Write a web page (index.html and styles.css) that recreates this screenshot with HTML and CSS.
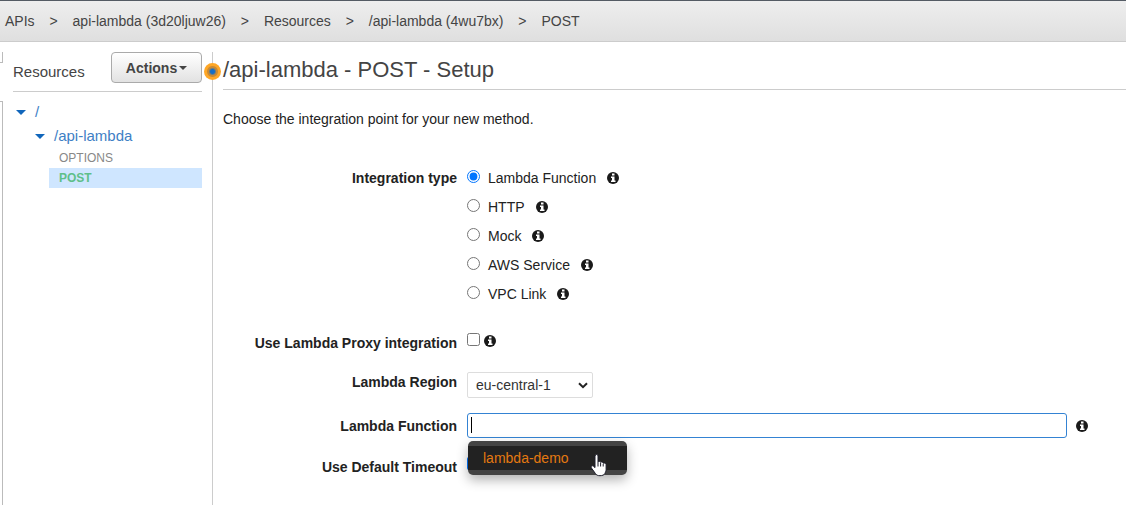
FILE: index.html
```html
<!DOCTYPE html>
<html lang="en">
<head>
<meta charset="utf-8">
<meta name="viewport" content="width=device-width, initial-scale=1">
<title>/api-lambda - POST - Setup</title>
<link rel="stylesheet" href="styles.css">
</head>
<body>
<svg class="defs" aria-hidden="true">
  <symbol id="info" viewBox="0 0 12 12">
    <circle cx="6" cy="6" r="6" fill="#1a1a1a"/>
    <path d="M5 1.500h2.500v2H5zM4 4.500h3.500v4h1V10H4V8.500h1V6H4z" fill="#fff"/>
  </symbol>
</svg>
<nav class="breadcrumb" aria-label="Breadcrumb">
  <a href="#">APIs</a><span class="sep">&gt;</span>
  <a href="#">api-lambda (3d20ljuw26)</a><span class="sep">&gt;</span>
  <a href="#">Resources</a><span class="sep">&gt;</span>
  <a href="#">/api-lambda (4wu7bx)</a><span class="sep">&gt;</span>
  <a href="#">POST</a>
</nav>
<div class="workspace">
  <div class="edge"><div class="edge-tab"></div><div class="edge-panel"></div></div>
  <aside class="sidebar">
    <div class="sidebar-head">
      <h2>Resources</h2>
      <button class="actions" type="button">Actions<span class="caret"></span></button>
    </div>
    <ul class="tree">
      <li class="node"><span class="toggle"></span><a href="#">/</a></li>
      <li class="node child"><span class="toggle"></span><a href="#">/api-lambda</a></li>
      <li class="method"><a href="#">OPTIONS</a></li>
      <li class="method selected"><a href="#">POST</a></li>
    </ul>
  </aside>
  <div class="splitter"><span class="handle"></span></div>
  <main class="content">
    <h1>/api-lambda - POST - Setup</h1>
    <p class="intro">Choose the integration point for your new method.</p>
    <form class="form">
      <div class="row types" role="radiogroup" aria-labelledby="type-label">
        <span class="label" id="type-label">Integration type</span>
        <div class="options">
          <div class="option"><input type="radio" name="type" id="t1" checked><label for="t1">Lambda Function</label><svg class="info"><use href="#info"/></svg></div>
          <div class="option"><input type="radio" name="type" id="t2"><label for="t2">HTTP</label><svg class="info"><use href="#info"/></svg></div>
          <div class="option"><input type="radio" name="type" id="t3"><label for="t3">Mock</label><svg class="info"><use href="#info"/></svg></div>
          <div class="option"><input type="radio" name="type" id="t4"><label for="t4">AWS Service</label><svg class="info"><use href="#info"/></svg></div>
          <div class="option"><input type="radio" name="type" id="t5"><label for="t5">VPC Link</label><svg class="info"><use href="#info"/></svg></div>
        </div>
      </div>
      <div class="row proxy">
        <label class="label" for="proxy">Use Lambda Proxy integration</label>
        <div class="control"><input type="checkbox" id="proxy"><svg class="info"><use href="#info"/></svg></div>
      </div>
      <div class="row region">
        <label class="label" for="region">Lambda Region</label>
        <div class="select-wrap">
          <select id="region"><option>eu-central-1</option></select>
          <svg class="chevron" viewBox="0 0 10 7"><path d="M1 1.200l4 4 4-4" fill="none" stroke="#222" stroke-width="2"/></svg>
        </div>
      </div>
      <div class="row function">
        <label class="label" for="fn">Lambda Function</label>
        <div class="control">
          <div class="combo">
            <input type="text" id="fn" autocomplete="off">
            <span class="text-cursor"></span>
            <div class="menu"><button type="button" class="menu-item">lambda-demo</button>
              <svg class="pointer" viewBox="0 0 18 24"><path d="M5.500 2C6.500 1 8 1.600 8 3v6c.4-1 2.300-.8 2.600.4C11.300 8.500 13 9 13.200 10.300c1-.7 2.900 0 2.900 1.300v4.800c0 2-.8 3-1.300 4.300-.5 1.200-2.500 2-4.800 2s-3.700-.6-4.600-2.200L1.300 14.800c-.8-1.400.7-2.700 2-1.700L5 14.600V3z" fill="#fff" stroke="#1d1d2b" stroke-width="1"/><path d="M8 9v4.500M10.600 10v3.500M13.200 11v2.500" stroke="#1d1d2b" stroke-width="1"/></svg>
            </div>
          </div>
          <svg class="info"><use href="#info"/></svg>
        </div>
      </div>
      <div class="row timeout">
        <label class="label" for="timeout">Use Default Timeout</label>
        <div class="control"><input type="checkbox" id="timeout" checked></div>
      </div>
    </form>
  </main>
</div>
</body>
</html>
```

FILE: styles.css
```css
* { box-sizing: border-box; }
body {
  margin: 0;
  min-height: 100vh;
  display: flex;
  flex-direction: column;
  background: #fff;
  color: #222;
  font: 14px/20px "Liberation Sans", Arial, sans-serif;
}
a { color: inherit; text-decoration: none; }
h1, h2, p, ul { margin: 0; padding: 0; font-weight: normal; }
ul { list-style: none; }
input, select, button { margin: 0; font: inherit; }
.defs { position: absolute; width: 0; height: 0; }
.breadcrumb {
  display: flex;
  align-items: center;
  height: 42px;
  padding-left: 5px;
  color: #444;
  background: linear-gradient(#eee, #dfdfdf);
  border-top: 1px solid #545b64;
  border-bottom: 1px solid #ccc;
}
.sep { width: 38px; text-align: center; }
.workspace { flex: 1; display: flex; padding-top: 10px; }
.edge { width: 3px; display: flex; flex-direction: column; gap: 38px; }
.edge-tab { height: 11px; border: solid #bbb; border-width: 0 1px 1px 0; }
.edge-panel { flex: 1; border: solid #bbb; border-width: 1px 1px 0 0; }
.sidebar { width: 209px; padding: 0 10px; }
.sidebar-head {
  display: flex;
  justify-content: space-between;
  height: 40px;
  border-bottom: 1px solid #ccc;
}
.sidebar-head h2 { font-size: 15px; line-height: 40px; color: #444; }
.actions {
  display: flex;
  align-items: center;
  justify-content: center;
  gap: 2px;
  width: 91px;
  height: 31px;
  padding: 0;
  font-weight: bold;
  color: #444;
  background: linear-gradient(#fff, #e2e2e2);
  border: 1px solid #aaa;
  border-radius: 4px;
}
.caret { border: 4px solid transparent; border-top-color: #444; border-bottom: 0; }
.tree { padding-top: 8px; }
.node { display: flex; align-items: center; height: 24px; padding-left: 3px; gap: 10px; font-size: 15px; color: #3e80c5; }
.child { padding-left: 22px; }
.toggle { border: 5px solid transparent; border-top-color: #1166bb; border-bottom: 0; }
.node .toggle + a { margin-left: -1px; }
.method { margin-left: 36px; padding-left: 10px; font-size: 12px; color: #888; }
.selected { background: #cfe6ff; color: #5fbf8a; font-weight: bold; }
.splitter { position: relative; width: 1px; background: #ccc; }
.handle {
  position: absolute;
  top: 11px;
  left: -8px;
  width: 17px;
  height: 17px;
  border-radius: 50%;
  background: radial-gradient(circle, #146ec8 0 2px, #c98a35 4px 5px, #ffa726 6px);
}
.content { flex: 1; min-width: 0; padding-left: 10px; }
h1 { height: 38px; font-size: 22px; line-height: 35px; color: #444; border-bottom: 1px solid #ccc; }
.intro { padding-top: 19px; }
.form { padding-top: 39px; }
.row { display: grid; grid-template-columns: 234px minmax(0, 1fr); column-gap: 10px; }
.label { font-weight: bold; text-align: right; }
.options { display: grid; gap: 9px; }
.option { display: flex; height: 20px; }
.option input { margin-top: 2px; }
.option label { margin-left: 8px; }
.option .info { margin: 4px 0 0 11px; }
input[type="radio"], input[type="checkbox"] { width: 13px; height: 13px; accent-color: #0075ff; }
.info { flex: none; width: 12px; height: 12px; }
.proxy { margin-top: 29px; }
.proxy .info { margin-top: 2px; }
.control { display: flex; gap: 4px; }
.region { margin-top: 19px; }
.select-wrap { position: relative; width: 126px; }
select {
  display: block;
  appearance: none;
  width: 100%;
  height: 26px;
  padding: 0 8px;
  color: #333;
  background: #fff;
  border: 1px solid #ddd;
  border-radius: 2px;
}
.chevron { position: absolute; right: 5px; top: 10px; width: 10px; height: 7px; pointer-events: none; }
.function { margin-top: 15px; align-items: center; }
.function .control { align-items: center; gap: 9px; margin-right: 37px; }
.combo { position: relative; flex: 0 1 600px; }
.combo input {
  display: block;
  width: 100%;
  height: 25px;
  padding: 0 8px;
  border: 1px solid #3483d3;
  border-radius: 3px;
  outline: 0;
}
.text-cursor { position: absolute; left: 4px; top: 4px; width: 1px; height: 16px; background: #000; }
.menu {
  position: absolute;
  z-index: 1;
  top: 28px;
  left: 1px;
  width: 159px;
  padding: 5px 0;
  background: #444;
  border-radius: 5px;
  box-shadow: 0 5px 12px rgba(0, 0, 0, .3);
}
.menu-item {
  display: block;
  width: 100%;
  height: 24px;
  padding: 0 15px;
  color: #e47911;
  text-align: left;
  background: #222;
  border: 0;
}
.pointer { position: absolute; left: 122px; top: 12px; width: 18px; height: 24px; }
.timeout { margin-top: 19px; }
```
